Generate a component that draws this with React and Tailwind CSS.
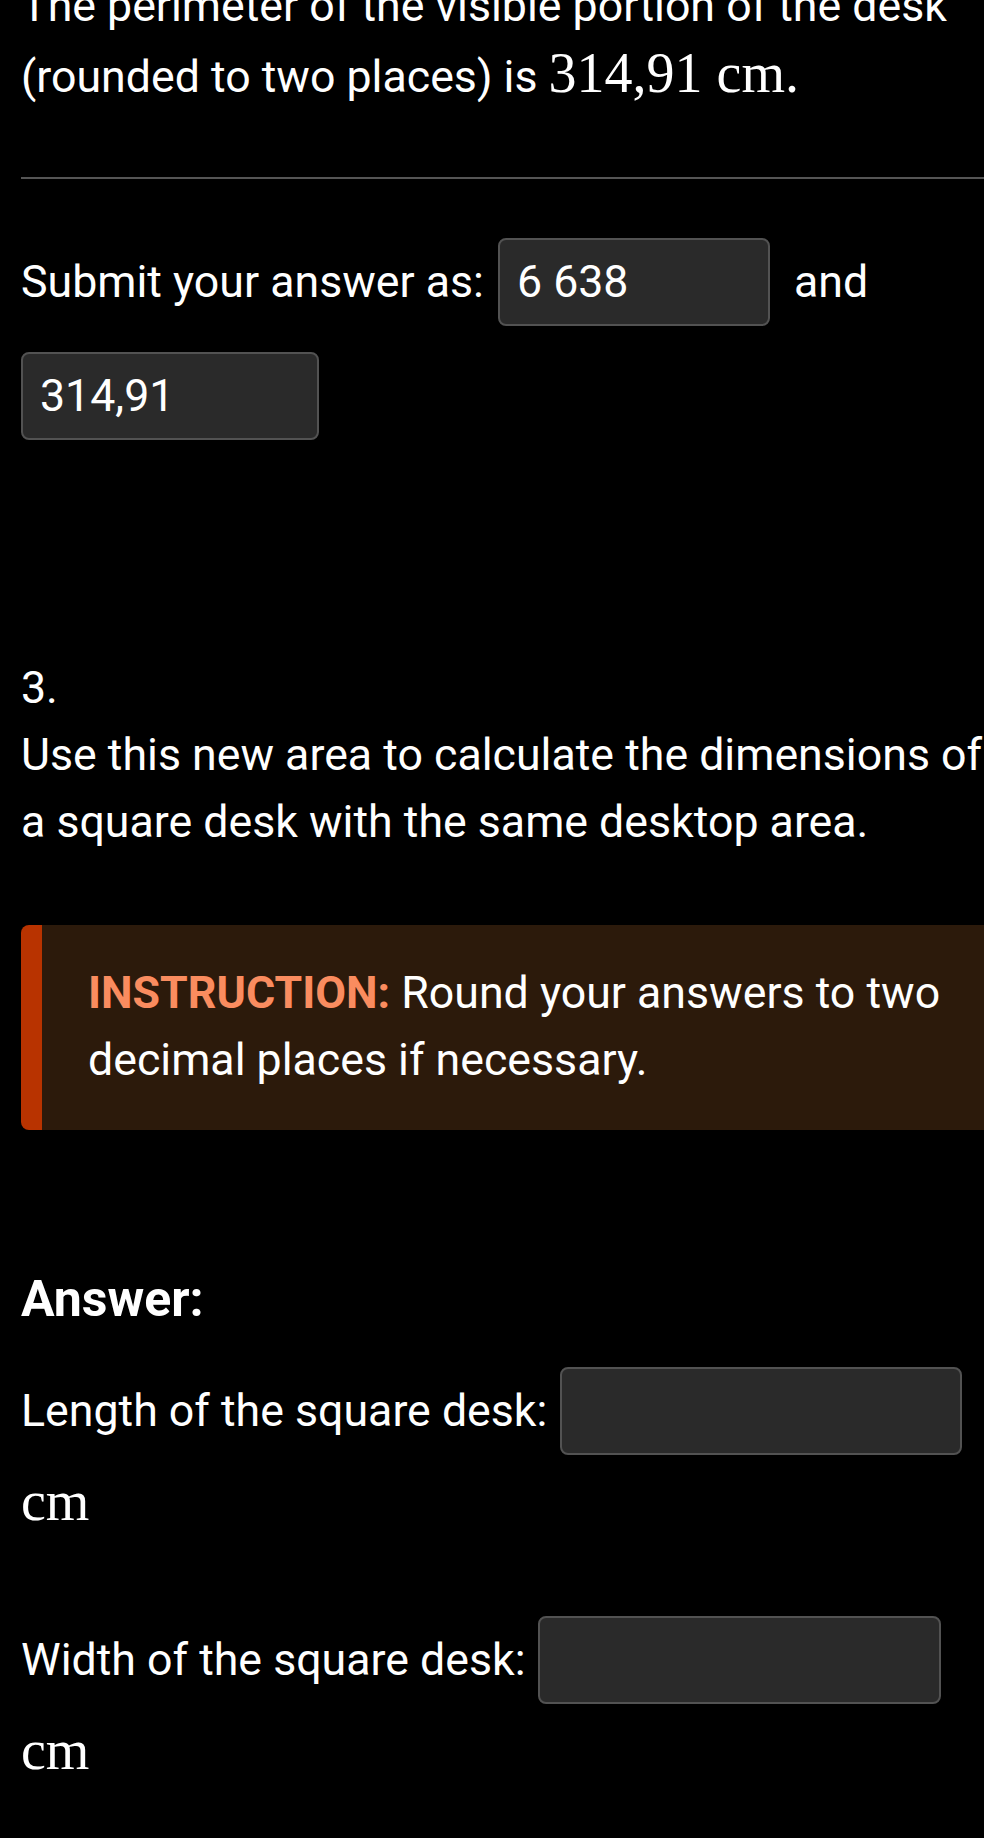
const serif = "font-['Liberation_Serif',serif] text-[56px]";

function Box({ value = "", width }) {
  return (
    <input
      readOnly
      value={value}
      className={`my-[13px] h-[88px] ${width} rounded-[8px] border-2 border-[#525252] bg-[#2a2a2a] px-[17px] text-[44.7px] text-white outline-none`}
    />
  );
}

const App = () => {
  return (
    <div className="min-h-screen w-full overflow-hidden bg-black text-white">
      <div className="ml-[21px] w-[990px] font-['Roboto',sans-serif] text-[44.7px] leading-[67px]">
        <p className="-mt-[27px]">
          The perimeter of the visible portion of the desk (rounded to two places) is{" "}
          <span className={serif}>314,91 cm.</span>
        </p>

        <div className="mt-[66px] h-[2px] bg-[#555555]" />

        <div className="mt-[46px] flex flex-wrap items-center">
          <span>Submit your answer as:</span>
          <div className="ml-[14px]">
            <Box value="6 638" width="w-[272px]" />
          </div>
          <span className="ml-[24px]">and</span>
          <div className="w-full">
            <Box value="314,91" width="w-[298px]" />
          </div>
        </div>

        <p className="mt-[202px]">3.</p>
        <p>Use this new area to calculate the dimensions of a square desk with the same desktop area.</p>

        <div className="mt-[69px] rounded-[8px] border-l-[21px] border-[#b83300] bg-[#2c1a0b] pl-[46px] pr-[46px] pt-[35px] pb-[36px]">
          <p>
            <span className="font-bold text-[#fa8c5f]">INSTRUCTION:</span> Round your answers to two decimal places if necessary.
          </p>
        </div>

        <p className="mt-[136px] text-[50px] font-bold">Answer:</p>

        <div className="mt-[21px] flex flex-wrap items-center">
          <span>Length of the square desk:</span>
          <div className="ml-[13px]">
            <Box width="w-[402px]" />
          </div>
          <span className={`${serif} w-full`}>cm</span>
        </div>

        <div className="mt-[68px] flex flex-wrap items-center">
          <span>Width of the square desk:</span>
          <div className="ml-[12px]">
            <Box width="w-[403px]" />
          </div>
          <span className={`${serif} w-full`}>cm</span>
        </div>
        <div className="h-[60px]" />
      </div>
    </div>
  );
};

export default App;
